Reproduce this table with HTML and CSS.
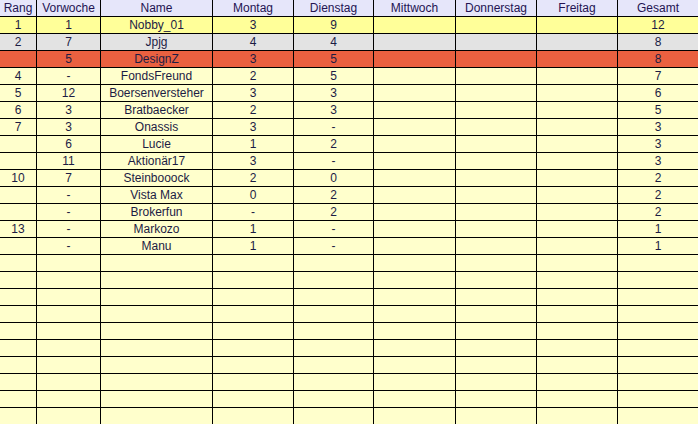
FILE: index.html
```html
<!DOCTYPE html>
<html lang="de">
<head>
<meta charset="utf-8">
<title>Rangliste</title>
<link rel="stylesheet" href="styles.css">
</head>
<body>
<table class="board">
<colgroup>
<col class="c-rang"><col class="c-vor"><col class="c-name"><col class="c-mo"><col class="c-di"><col class="c-mi"><col class="c-do"><col class="c-fr"><col class="c-ges">
</colgroup>
<thead>
<tr><th>Rang</th><th>Vorwoche</th><th>Name</th><th>Montag</th><th>Dienstag</th><th>Mittwoch</th><th>Donnerstag</th><th>Freitag</th><th>Gesamt</th></tr>
</thead>
<tbody>
<tr class="first"><td>1</td><td>1</td><td>Nobby_01</td><td>3</td><td>9</td><td></td><td></td><td></td><td>12</td></tr>
<tr class="second"><td>2</td><td>7</td><td>Jpjg</td><td>4</td><td>4</td><td></td><td></td><td></td><td>8</td></tr>
<tr class="self"><td></td><td>5</td><td>DesignZ</td><td>3</td><td>5</td><td></td><td></td><td></td><td>8</td></tr>
<tr><td>4</td><td>-</td><td>FondsFreund</td><td>2</td><td>5</td><td></td><td></td><td></td><td>7</td></tr>
<tr><td>5</td><td>12</td><td>Boersenversteher</td><td>3</td><td>3</td><td></td><td></td><td></td><td>6</td></tr>
<tr><td>6</td><td>3</td><td>Bratbaecker</td><td>2</td><td>3</td><td></td><td></td><td></td><td>5</td></tr>
<tr><td>7</td><td>3</td><td>Onassis</td><td>3</td><td>-</td><td></td><td></td><td></td><td>3</td></tr>
<tr><td></td><td>6</td><td>Lucie</td><td>1</td><td>2</td><td></td><td></td><td></td><td>3</td></tr>
<tr><td></td><td>11</td><td>Aktionär17</td><td>3</td><td>-</td><td></td><td></td><td></td><td>3</td></tr>
<tr><td>10</td><td>7</td><td>Steinbooock</td><td>2</td><td>0</td><td></td><td></td><td></td><td>2</td></tr>
<tr><td></td><td>-</td><td>Vista Max</td><td>0</td><td>2</td><td></td><td></td><td></td><td>2</td></tr>
<tr><td></td><td>-</td><td>Brokerfun</td><td>-</td><td>2</td><td></td><td></td><td></td><td>2</td></tr>
<tr><td>13</td><td>-</td><td>Markozo</td><td>1</td><td>-</td><td></td><td></td><td></td><td>1</td></tr>
<tr><td></td><td>-</td><td>Manu</td><td>1</td><td>-</td><td></td><td></td><td></td><td>1</td></tr>
<tr><td></td><td></td><td></td><td></td><td></td><td></td><td></td><td></td><td></td></tr>
<tr><td></td><td></td><td></td><td></td><td></td><td></td><td></td><td></td><td></td></tr>
<tr><td></td><td></td><td></td><td></td><td></td><td></td><td></td><td></td><td></td></tr>
<tr><td></td><td></td><td></td><td></td><td></td><td></td><td></td><td></td><td></td></tr>
<tr><td></td><td></td><td></td><td></td><td></td><td></td><td></td><td></td><td></td></tr>
<tr><td></td><td></td><td></td><td></td><td></td><td></td><td></td><td></td><td></td></tr>
<tr><td></td><td></td><td></td><td></td><td></td><td></td><td></td><td></td><td></td></tr>
<tr><td></td><td></td><td></td><td></td><td></td><td></td><td></td><td></td><td></td></tr>
<tr><td></td><td></td><td></td><td></td><td></td><td></td><td></td><td></td><td></td></tr>
<tr><td></td><td></td><td></td><td></td><td></td><td></td><td></td><td></td><td></td></tr>
<tr><td></td><td></td><td></td><td></td><td></td><td></td><td></td><td></td><td></td></tr>
</tbody>
</table>
</body>
</html>
```
FILE: styles.css
```css
html, body {
  margin: 0;
  padding: 0;
  background: #ffffcc;
  overflow: hidden;
}
.board {
  border-collapse: separate;
  border-spacing: 0;
  table-layout: fixed;
  width: 698px;
  font-family: "Liberation Sans", Arial, sans-serif;
  font-size: 12px;
  color: #1c1c44;
}
.c-rang { width: 37px; }
.c-vor { width: 64px; }
.c-name { width: 112px; }
.c-mo { width: 81px; }
.c-di { width: 80px; }
.c-mi { width: 82px; }
.c-do { width: 81px; }
.c-fr { width: 81px; }
.c-ges { width: 80px; }
.board th, .board td {
  height: 16px;
  padding: 0;
  text-align: center;
  vertical-align: middle;
  font-weight: normal;
  line-height: 16px;
  border-right: 1px solid #000;
  border-bottom: 1px solid #000;
  white-space: nowrap;
  overflow: hidden;
}
.board th:last-child, .board td:last-child {
  border-right: none;
}
.board th {
  background: #e6e6fa;
  color: #241452;
}
.board td { background: #ffffcc; }
.board tr.first td { background: #ffff99; }
.board tr.second td { background: #e3e3e3; }
.board tr.self td { background: #ea6040; }
```
